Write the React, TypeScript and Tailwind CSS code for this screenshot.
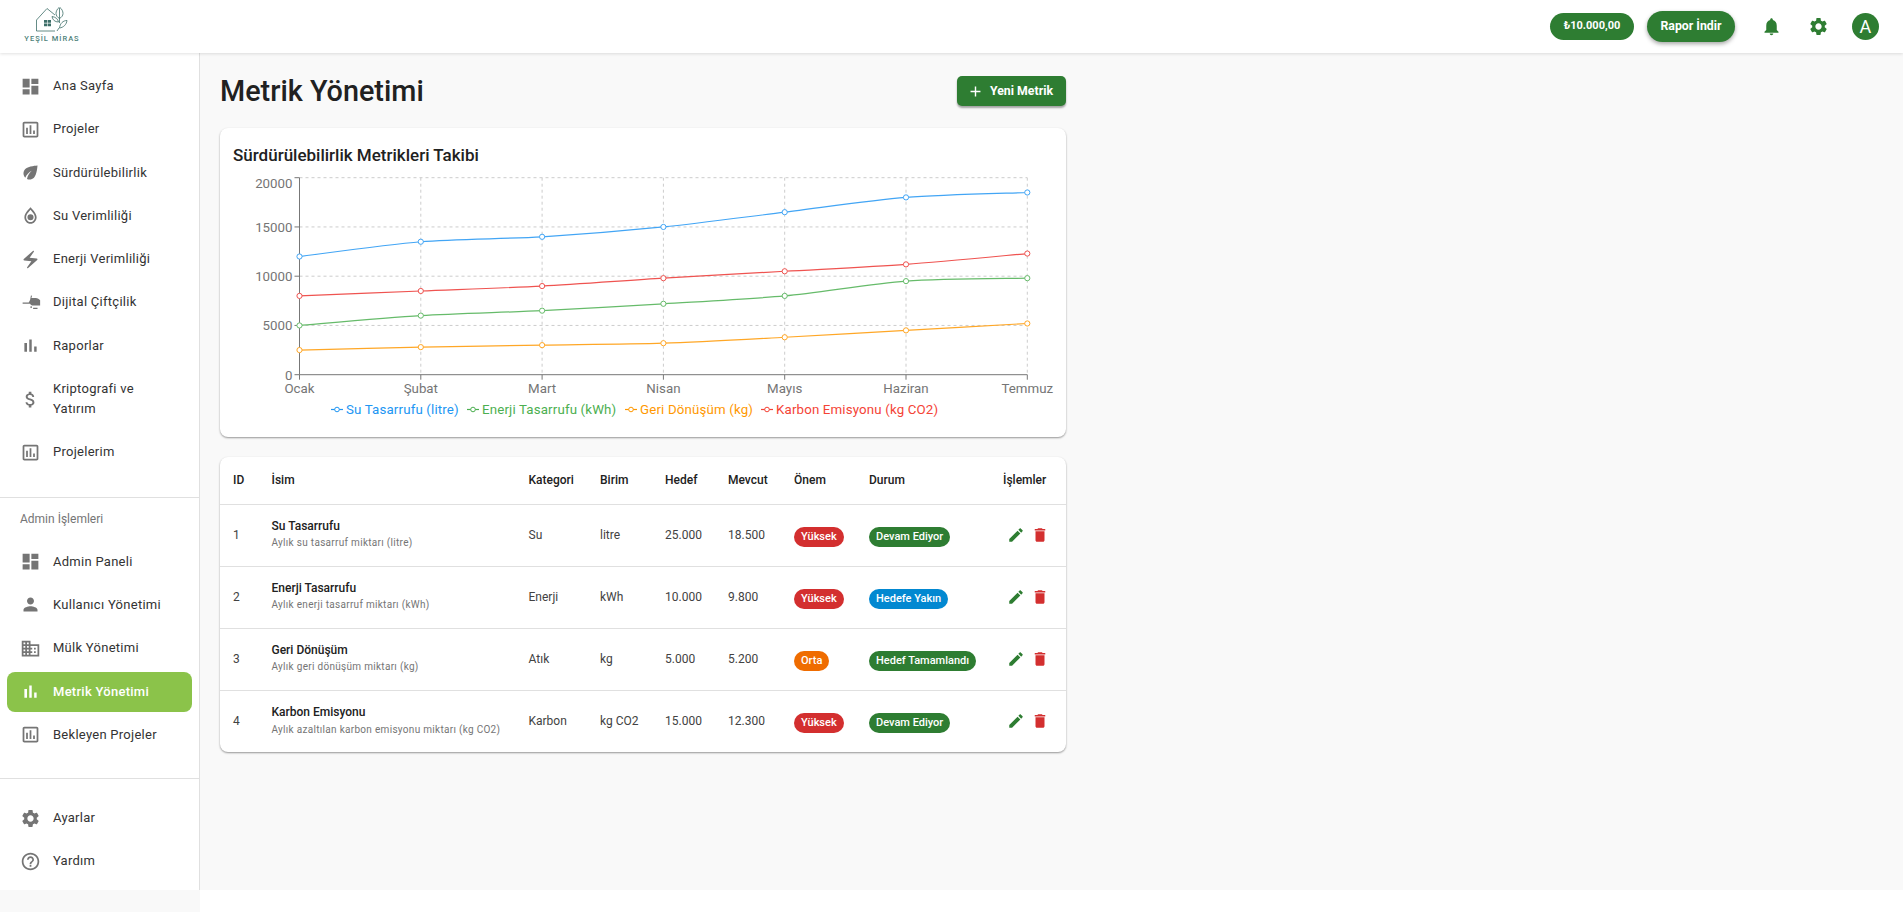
import React from 'react';

const P = {
  dashboard: 'M3 13h8V3H3v10zm0 8h8v-6H3v6zm10 0h8V11h-8v10zm0-18v6h8V3h-8z',
  assessment: 'M19 3H5c-1.1 0-2 .9-2 2v14c0 1.1.9 2 2 2h14c1.1 0 2-.9 2-2V5c0-1.1-.9-2-2-2zm0 16H5V5h14v14zM7 10h2v7H7zm4-3h2v10h-2zm4 6h2v4h-2z',
  eco: 'M6.05 8.05c-2.73 2.73-2.73 7.15-.02 9.88 1.47-3.4 4.09-6.24 7.36-7.93-2.77 2.34-4.71 5.61-5.39 9.32 2.6 1.23 5.8.78 7.95-1.37C19.43 14.47 20 4 20 4S9.53 4.57 6.05 8.05z',
  drop: 'M12 2.5c-1 1.3-7 6.2-7 11.5 0 4 3.1 7.5 7 7.5s7-3.500 7-7.500c0-5.300-6-10.200-7-11.500zm0 3c1.600 2 5 5.300 5 8.500 0 2.900-2.200 5.500-5 5.500s-5-2.600-5-5.500c0-3.200 3.400-6.500 5-8.500zM12 10.500a3.500 3.500 0 1 0 0 7 3.500 3.500 0 0 0 0-7z',
  bolt: 'M14.69 2.21 4.33 11.49c-.64.58-.28 1.65.58 1.73L13 14l-4.85 6.76c-.22.31-.19.74.08 1.01.3.3.77.31 1.08.02l10.36-9.28c.64-.58.28-1.65-.58-1.73L11 10l4.85-6.76c.22-.31.19-.74-.08-1.01-.3-.3-.77-.31-1.08-.02z',
  drone: 'M11.500 9 10 12H3v1.400h8.500c.6 1.300 1.800 2.100 3.500 2.100h8V9.500C22 8 20 6.800 18 6.800h-5l.8-2.500-1.300-.3zM12 16.200h1.500v2H12zM15 18h5v1.500h-5z',
  bars: 'M5 9.200h3V19H5zM10.600 5h2.800v14h-2.800zm5.600 8H19v6h-2.800z',
  money: 'M11.800 10.900c-2.270-.59-3-1.200-3-2.150 0-1.090 1.010-1.850 2.700-1.850 1.780 0 2.440.85 2.500 2.100h2.210c-.07-1.720-1.120-3.300-3.210-3.810V3h-3v2.160c-1.940.42-3.500 1.680-3.500 3.610 0 2.310 1.910 3.460 4.700 4.130 2.500.6 3 1.480 3 2.410 0 .69-.49 1.790-2.700 1.790-2.060 0-2.870-.92-2.980-2.100h-2.200c.12 2.190 1.760 3.420 3.680 3.830V21h3v-2.150c1.950-.37 3.500-1.500 3.500-3.550 0-2.840-2.430-3.810-4.700-4.400z',
  person: 'M12 12c2.210 0 4-1.790 4-4s-1.790-4-4-4-4 1.790-4 4 1.790 4 4 4zm0 2c-2.670 0-8 1.340-8 4v2h16v-2c0-2.660-5.330-4-8-4z',
  domain: 'M12 7V3H2v18h20V7H12zM6 19H4v-2h2v2zm0-4H4v-2h2v2zm0-4H4V9h2v2zm0-4H4V5h2v2zm4 12H8v-2h2v2zm0-4H8v-2h2v2zm0-4H8V9h2v2zm0-4H8V5h2v2zm10 12h-8v-2h2v-2h-2v-2h2v-2h-2V9h8v10zm-2-8h-2v2h2v-2zm0 4h-2v2h2v-2z',
  settings: 'M19.140 12.940c.04-.3.06-.61.06-.94 0-.32-.02-.64-.07-.94l2.030-1.580c.18-.14.23-.41.12-.61l-1.920-3.320c-.12-.22-.37-.29-.59-.22l-2.390.96c-.5-.38-1.030-.7-1.620-.94l-.36-2.540c-.04-.24-.24-.41-.48-.41h-3.840c-.24 0-.43.17-.47.41l-.36 2.540c-.59.24-1.130.57-1.620.94l-2.390-.96c-.22-.08-.47 0-.59.22L2.740 8.870c-.12.21-.08.47.12.61l2.030 1.580c-.05.3-.09.63-.09.94s.02.64.07.94l-2.030 1.580c-.18.14-.23.41-.12.61l1.920 3.320c.12.22.37.29.59.22l2.390-.96c.5.38 1.030.7 1.620.94l.36 2.540c.05.24.24.41.48.41h3.840c.24 0 .44-.17.47-.41l.36-2.540c.59-.24 1.130-.56 1.620-.94l2.390.96c.22.08.47 0 .59-.22l1.920-3.320c.12-.22.07-.47-.12-.61l-2.010-1.580zM12 15.600c-1.980 0-3.600-1.620-3.600-3.600s1.620-3.600 3.600-3.600 3.600 1.620 3.600 3.600-1.620 3.600-3.600 3.600z',
  help: 'M11 18h2v-2h-2v2zm1-16C6.480 2 2 6.480 2 12s4.480 10 10 10 10-4.480 10-10S17.520 2 12 2zm0 18c-4.410 0-8-3.590-8-8s3.590-8 8-8 8 3.590 8 8-3.590 8-8 8zm0-14c-2.210 0-4 1.790-4 4h2c0-1.100.9-2 2-2s2 .9 2 2c0 2-3 1.750-3 5h2c0-2.250 3-2.500 3-5 0-2.210-1.790-4-4-4z',
  bell: 'M12 22c1.100 0 2-.9 2-2h-4c0 1.100.89 2 2 2zm6-6v-5c0-3.070-1.640-5.640-4.500-6.320V4c0-.83-.67-1.500-1.500-1.500s-1.500.67-1.500 1.500v.68C7.630 5.360 6 7.920 6 11v5l-2 2v1h16v-1l-2-2z',
  edit: 'M3 17.250V21h3.750L17.810 9.940l-3.750-3.750L3 17.250zM20.710 7.040c.39-.39.39-1.020 0-1.410l-2.340-2.340c-.39-.39-1.020-.39-1.410 0l-1.830 1.830 3.750 3.750 1.830-1.830z',
  trash: 'M6 19c0 1.100.9 2 2 2h8c1.100 0 2-.9 2-2V7H6v12zM19 4h-3.500l-1-1h-5l-1 1H5v2h14V4z',
  add: 'M19 13h-6v6h-2v-6H5v-2h6V5h2v6h6v2z',
};

function Icon({ d, className }: { d: string; className?: string }) {
  return (
    <svg viewBox="0 0 24 24" fill="currentColor" className={className}>
      <path d={d} fillRule="evenodd" />
    </svg>
  );
}

function NavItem({ icon, label, active, tall }: { icon: string; label: string; active?: boolean; tall?: boolean }) {
  return (
    <div
      className={`mx-[7px] mb-[3.3px] flex items-center rounded-lg pl-[12.5px] pr-2 ${tall ? 'h-[60px]' : 'h-10'} ${
        active ? 'bg-[#8bc34a] text-white' : 'text-[#333333]'
      }`}
    >
      <Icon d={icon} className={`h-[21px] w-[21px] shrink-0 ${active ? 'text-white' : 'text-[#757575]'}`} />
      <span className={`ml-[12.5px] text-[13px] leading-[20px] tracking-[0.27px] ${active ? 'font-medium' : ''} ${tall ? 'max-w-[100px]' : ''}`}>
        {label}
      </span>
    </div>
  );
}

function Logo() {
  return (
    <div className="mb-[3px] ml-[24px] flex w-[56px] flex-col items-center text-[#3d6e68]">
      <svg viewBox="0 0 56 26" className="h-[26px] w-[56px]" fill="none" stroke="currentColor" strokeWidth="0.8">
        <path d="M12.500 13 23 1.500l8 6.500M12.500 13v11H31" />
        <path d="M20 13h3.200v2.800H20zM23.800 13H27v2.800h-3.200zM20 16.400h3.200v2.800H20zM23.800 16.400H27v2.800h-3.200z" fill="currentColor" stroke="none" />
        <path d="M35.500 0c-2.500 2-3.500 4.500-3.500 6.500 0 2 1.500 4 3.500 5 2-1 3.500-3 3.500-5 0-2-1-4.500-3.500-6.500zM35.500 1v15" />
        <path d="M28 9.500c.5 3.500 3 5.500 6.500 5.500-.5-3-3-5-6.500-5.500zM43 13.500c-4 0-7 3-7.500 7.500 4-.5 7-3.500 7.500-7.500zM35 21l-2 3" />
      </svg>
      <span className="mt-[2px] text-[7.5px] font-medium leading-[8px] tracking-[1px] whitespace-nowrap text-[#4d7f79]">YEŞİL MİRAS</span>
    </div>
  );
}

function Header() {
  return (
    <header className="relative z-10 flex h-[53px] shrink-0 items-center justify-between bg-white shadow-[0_1px_3px_rgba(0,0,0,0.12)]">
      <Logo />
      <div className="flex items-center">
        <div className="flex h-[27px] w-[84px] items-center justify-center rounded-full bg-[#2e7d32] text-[11px] font-bold text-white">
          ₺10.000,00
        </div>
        <button className="ml-[13px] h-[31px] w-[88px] rounded-full bg-[#2e7d32] text-[12.3px] font-bold text-white shadow-[0_2px_4px_rgba(0,0,0,0.35)]">
          Rapor İndir
        </button>
        <Icon d={P.bell} className="ml-[25.5px] h-[21px] w-[21px] text-[#2e7d32]" />
        <Icon d={P.settings} className="ml-[26px] h-[21px] w-[21px] text-[#2e7d32]" />
        <div className="ml-[23px] mr-[24px] flex h-[27.5px] w-[27.5px] items-center justify-center rounded-full bg-[#2e7d32] text-[18px] text-white">
          A
        </div>
      </div>
    </header>
  );
}

function Sidebar() {
  return (
    <aside className="flex h-[837px] w-[200px] shrink-0 flex-col border-r border-[#e0e0e0] bg-white">
      <div className="pt-[13px]">
        <NavItem icon={P.dashboard} label="Ana Sayfa" />
        <NavItem icon={P.assessment} label="Projeler" />
        <NavItem icon={P.eco} label="Sürdürülebilirlik" />
        <NavItem icon={P.drop} label="Su Verimliliği" />
        <NavItem icon={P.bolt} label="Enerji Verimliliği" />
        <NavItem icon={P.drone} label="Dijital Çiftçilik" />
        <NavItem icon={P.bars} label="Raporlar" />
        <NavItem icon={P.money} label="Kriptografi ve Yatırım" tall />
        <NavItem icon={P.assessment} label="Projelerim" />
      </div>
      <div className="mt-[21px] border-t border-[#e0e0e0]" />
      <div className="flex h-[44px] items-center pb-[2px] pl-[20px] text-[12px] text-[#757575]">Admin İşlemleri</div>
      <NavItem icon={P.dashboard} label="Admin Paneli" />
      <NavItem icon={P.person} label="Kullanıcı Yönetimi" />
      <NavItem icon={P.domain} label="Mülk Yönetimi" />
      <NavItem icon={P.bars} label="Metrik Yönetimi" active />
      <NavItem icon={P.assessment} label="Bekleyen Projeler" />
      <div className="mt-[20px] border-t border-[#e0e0e0]" />
      <div className="pt-[19px]">
        <NavItem icon={P.settings} label="Ayarlar" />
        <NavItem icon={P.help} label="Yardım" />
      </div>
    </aside>
  );
}

const months = ['Ocak', 'Şubat', 'Mart', 'Nisan', 'Mayıs', 'Haziran', 'Temmuz'];
const series = [
  { color: '#42a5f5', text: '#2196f3', label: 'Su Tasarrufu (litre)', values: [12000, 13500, 14000, 15000, 16500, 18000, 18500] },
  { color: '#66bb6a', text: '#4caf50', label: 'Enerji Tasarrufu (kWh)', values: [5000, 6000, 6500, 7200, 8000, 9500, 9800] },
  { color: '#ffa726', text: '#ff9800', label: 'Geri Dönüşüm (kg)', values: [2500, 2800, 3000, 3200, 3800, 4500, 5200] },
  { color: '#ef5350', text: '#f44336', label: 'Karbon Emisyonu (kg CO2)', values: [8000, 8500, 9000, 9800, 10500, 11200, 12300] },
];

// chart coordinates are relative to the svg, which starts at x=233, y=170
const X0 = 66.5;
const XSTEP = 121.3;
const YTOP = 7.7;
const YBOT = 204.7;
const xAt = (i: number) => X0 + i * XSTEP;
const yAt = (v: number) => YBOT - (v / 20000) * (YBOT - YTOP);

function curve(values: number[]) {
  const pts = values.map((v, i) => [xAt(i), yAt(v)]);
  let d = `M${pts[0][0]} ${pts[0][1]}`;
  for (let i = 0; i < pts.length - 1; i++) {
    const p0 = pts[Math.max(i - 1, 0)];
    const p1 = pts[i];
    const p2 = pts[i + 1];
    const p3 = pts[Math.min(i + 2, pts.length - 1)];
    const k = 0.14;
    d += ` C${p1[0] + (p2[0] - p0[0]) * k} ${p1[1] + (p2[1] - p0[1]) * k} ${p2[0] - (p3[0] - p1[0]) * k} ${p2[1] - (p3[1] - p1[1]) * k} ${p2[0]} ${p2[1]}`;
  }
  return d;
}

function Chart() {
  const legendX = [98, 234, 392, 528];
  return (
    <svg width="830" height="256" className="block" fontFamily="Roboto, sans-serif">
      {[0, 5000, 10000, 15000, 20000].map((v) => (
        <g key={v}>
          {v > 0 && <line x1={X0} x2={xAt(6)} y1={yAt(v)} y2={yAt(v)} stroke="#cccccc" strokeDasharray="3 3" />}
          <line x1={X0 - 5} x2={X0} y1={yAt(v)} y2={yAt(v)} stroke="#777" />
          <text x={X0 - 7} y={yAt(v) + (v === 20000 ? 10 : 5)} textAnchor="end" fontSize="13.3" fill="#757575">{v}</text>
        </g>
      ))}
      {months.map((m, i) => (
        <g key={m}>
          {i > 0 && <line x1={xAt(i)} x2={xAt(i)} y1={YTOP} y2={YBOT} stroke="#cccccc" strokeDasharray="3 3" />}
          <line x1={xAt(i)} x2={xAt(i)} y1={YBOT} y2={YBOT + 5} stroke="#777" />
          <text x={xAt(i)} y={YBOT + 18} textAnchor="middle" fontSize="13.3" fill="#757575">{m}</text>
        </g>
      ))}
      <line x1={X0} x2={X0} y1={YTOP} y2={YBOT} stroke="#777" />
      <line x1={X0} x2={xAt(6)} y1={YBOT} y2={YBOT} stroke="#777" />
      {series.map((s) => (
        <g key={s.label}>
          <path d={curve(s.values)} fill="none" stroke={s.color} strokeWidth="1.2" />
          {s.values.map((v, i) => (
            <circle key={i} cx={xAt(i)} cy={yAt(v)} r="2.600" fill="#fff" stroke={s.color} strokeWidth="1" />
          ))}
        </g>
      ))}
      {series.map((s, i) => (
        <g key={s.label}>
          <line x1={legendX[i]} x2={legendX[i] + 12} y1={239.5} y2={239.5} stroke={s.text} strokeWidth="1.200" />
          <circle cx={legendX[i] + 6} cy={239.5} r="2.300" fill="#fff" stroke={s.text} />
          <text x={legendX[i] + 15} y={244} fontSize="13.3" letterSpacing="0.15" fill={s.text}>{s.label}</text>
        </g>
      ))}
    </svg>
  );
}

const rows = [
  { id: 1, name: 'Su Tasarrufu', desc: 'Aylık su tasarruf miktarı (litre)', cat: 'Su', unit: 'litre', target: '25.000', cur: '18.500', imp: 'Yüksek', impC: 'bg-[#d32f2f]', st: 'Devam Ediyor', stC: 'bg-[#2e7d32]' },
  { id: 2, name: 'Enerji Tasarrufu', desc: 'Aylık enerji tasarruf miktarı (kWh)', cat: 'Enerji', unit: 'kWh', target: '10.000', cur: '9.800', imp: 'Yüksek', impC: 'bg-[#d32f2f]', st: 'Hedefe Yakın', stC: 'bg-[#0288d1]' },
  { id: 3, name: 'Geri Dönüşüm', desc: 'Aylık geri dönüşüm miktarı (kg)', cat: 'Atık', unit: 'kg', target: '5.000', cur: '5.200', imp: 'Orta', impC: 'bg-[#ef6c00]', st: 'Hedef Tamamlandı', stC: 'bg-[#2e7d32]' },
  { id: 4, name: 'Karbon Emisyonu', desc: 'Aylık azaltılan karbon emisyonu miktarı (kg CO2)', cat: 'Karbon', unit: 'kg CO2', target: '15.000', cur: '12.300', imp: 'Yüksek', impC: 'bg-[#d32f2f]', st: 'Devam Ediyor', stC: 'bg-[#2e7d32]' },
];

function Chip({ label, className }: { label: string; className: string }) {
  return (
    <span className={`inline-flex h-5 items-center whitespace-nowrap rounded-full px-[7px] text-[11px] font-medium text-white ${className}`}>
      {label}
    </span>
  );
}

function MetricTable() {
  const th = 'px-[13px] text-left text-[12px] font-medium text-[#212121]';
  const td = 'px-[13px] text-[12px] text-[#424242]';
  return (
    <div className="mt-[20px] overflow-hidden rounded-lg bg-white shadow-[0_1px_2px_rgba(0,0,0,0.4)]">
      <table className="w-full table-fixed border-collapse">
        <thead>
          <tr className="h-[47px] border-b border-[#e0e0e0]">
            <th className={`${th} w-[38.5px] pr-0`}>ID</th>
            <th className={`${th} w-[257px]`}>İsim</th>
            <th className={`${th} w-[71.5px] pr-0`}>Kategori</th>
            <th className={`${th} w-[65px]`}>Birim</th>
            <th className={`${th} w-[63px]`}>Hedef</th>
            <th className={`${th} w-[66px]`}>Mevcut</th>
            <th className={`${th} w-[75px]`}>Önem</th>
            <th className={`${th} w-[134px]`}>Durum</th>
            <th className={`${th} w-[76px] pr-0`}>İşlemler</th>
          </tr>
        </thead>
        <tbody>
          {rows.map((r, i) => (
            <tr key={r.id} className={`h-[62px] ${i < rows.length - 1 ? 'border-b border-[#e0e0e0]' : ''}`}>
              <td className={td}>{r.id}</td>
              <td className="px-[13px]">
                <div className="text-[12px] font-medium leading-[16px] text-[#212121]">{r.name}</div>
                <div className="mb-[2px] mt-[2.6px] whitespace-nowrap text-[10px] leading-[14px] tracking-[0.3px] text-[#757575]">{r.desc}</div>
              </td>
              <td className={td}>{r.cat}</td>
              <td className={`${td} pr-0`}>{r.unit}</td>
              <td className={td}>{r.target}</td>
              <td className={td}>{r.cur}</td>
              <td className="px-[13px]"><Chip label={r.imp} className={r.impC} /></td>
              <td className="pl-[13px] pr-0"><Chip label={r.st} className={r.stC} /></td>
              <td className="pl-[16.7px]">
                <div className="flex items-center gap-[6.6px]">
                  <Icon d={P.edit} className="h-[18px] w-[18px] text-[#2e7d32]" />
                  <Icon d={P.trash} className="h-[18px] w-[18px] text-[#d32f2f]" />
                </div>
              </td>
            </tr>
          ))}
        </tbody>
      </table>
    </div>
  );
}

export default function App() {
  return (
    <div className="flex h-[912px] flex-col overflow-hidden bg-white font-['Roboto',sans-serif]">
      <Header />
      <div className="flex flex-1">
        <div className="bg-[#f9f9f9]">
          <Sidebar />
        </div>
        <main className="h-[837px] flex-1 self-start bg-[#f9f9f9] pl-[20px] pt-[23px]">
          <div className="w-[846px]">
            <div className="flex h-[30px] items-center justify-between">
              <h1 className="text-[28.8px] font-medium leading-[30px] text-[#212121]">Metrik Yönetimi</h1>
              <button className="flex h-[30px] w-[109px] items-center rounded-[5px] bg-[#2e7d32] pl-[9.5px] text-[12.3px] font-bold text-white shadow-[0_2px_2px_rgba(0,0,0,0.35)]">
                <Icon d={P.add} className="mr-[6.5px] h-[17px] w-[17px]" />
                Yeni Metrik
              </button>
            </div>
            <section className="mt-[22px] h-[309px] rounded-lg bg-white pl-[13px] pt-[16px] shadow-[0_1px_2px_rgba(0,0,0,0.4)]">
              <h2 className="text-[17px] font-medium leading-[22px] text-[#212121]">Sürdürülebilirlik Metrikleri Takibi</h2>
              <div className="mt-[4px]">
                <Chart />
              </div>
            </section>
            <MetricTable />
          </div>
        </main>
      </div>
    </div>
  );
}
